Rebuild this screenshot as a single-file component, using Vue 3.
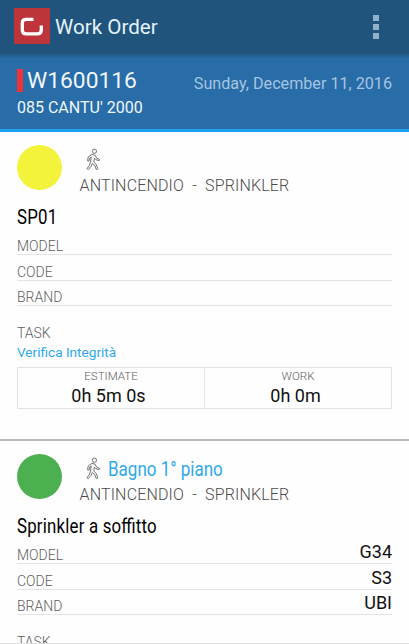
<script setup>
import { ref } from 'vue'

const order = ref({
  number: 'W1600116',
  site: "085 CANTU' 2000",
  date: 'Sunday, December 11, 2016'
})

const items = ref([
  {
    id: 1,
    color: '#f3f33b',
    place: '',
    category: 'ANTINCENDIO  -  SPRINKLER',
    name: 'SP01',
    fields: [
      { label: 'MODEL', value: '' },
      { label: 'CODE', value: '' },
      { label: 'BRAND', value: '' }
    ],
    task: 'Verifica Integrità',
    estimate: '0h 5m 0s',
    work: '0h 0m'
  },
  {
    id: 2,
    color: '#4caf50',
    place: 'Bagno 1° piano',
    category: 'ANTINCENDIO  -  SPRINKLER',
    name: 'Sprinkler a soffitto',
    fields: [
      { label: 'MODEL', value: 'G34' },
      { label: 'CODE', value: 'S3' },
      { label: 'BRAND', value: 'UBI' }
    ],
    task: '',
    estimate: '',
    work: ''
  }
])
</script>

<template>
  <div class="screen">
    <header class="app-bar">
      <svg class="logo" viewBox="0 0 36 36">
        <rect width="36" height="36" rx="1" fill="#bd353b" />
        <path
          d="M19.5 11.3H12Q8.3 11.3 8.3 15V22Q8.3 25.9 12.2 25.9H23.3Q27.3 25.9 27.3 22V17.5"
          fill="none"
          stroke="#fff"
          stroke-width="3.3"
        />
      </svg>
      <h1>Work Order</h1>
      <button class="menu" aria-label="Menu">
        <i></i><i></i><i></i>
      </button>
    </header>

    <section class="order">
      <div class="order-row">
        <span class="flag"></span>
        <span class="number">{{ order.number }}</span>
        <span class="date">{{ order.date }}</span>
      </div>
      <div class="site">{{ order.site }}</div>
    </section>

    <article v-for="item in items" :key="item.id" class="item">
      <div class="item-head">
        <span class="status" :style="{ backgroundColor: item.color }"></span>
        <div class="info">
          <div class="place">
            <svg class="walker" viewBox="0 0 16 24">
              <g fill="#f4f4f4" stroke="#707070" stroke-width="1" stroke-linejoin="round">
                <circle cx="9" cy="3.2" r="2.3" />
                <path
                  d="M6.3 6.5L2.4 9.2L1.6 13.5L3.1 13.8L4 10.5L5.5 9.4L4.8 14.6L3.6 18.4L1 21.7L2.4 22.8L5.5 19.3L6.6 16.4L9.5 18.7L10.9 22.7L12.7 22L10.9 17.4L8.4 14.6L9.1 10.6L10.6 12.2L14 13.3L14.5 11.8L11.6 10.7L9.4 7.2Z"
                />
              </g>
            </svg>
            <span class="place-name">{{ item.place }}</span>
          </div>
          <div class="category">{{ item.category }}</div>
        </div>
      </div>

      <h2>{{ item.name }}</h2>

      <div v-for="field in item.fields" :key="field.label" class="field">
        <span class="label">{{ field.label }}</span>
        <span class="value">{{ field.value }}</span>
      </div>

      <div class="label task-label">TASK</div>
      <div v-if="item.task" class="task">{{ item.task }}</div>

      <div v-if="item.estimate" class="times">
        <div class="time">
          <small>ESTIMATE</small>
          <span>{{ item.estimate }}</span>
        </div>
        <div class="time">
          <small>WORK</small>
          <span>{{ item.work }}</span>
        </div>
      </div>
    </article>
    <div class="bottom-line"></div>
  </div>
</template>

<style>
body {
  margin: 0;
}
</style>

<style scoped>
.screen {
  position: relative;
  height: 644px;
  overflow: hidden;
  background-color: #fefefe;
  font-family: Roboto, 'Liberation Sans', sans-serif;
}

.app-bar {
  display: flex;
  align-items: center;
  box-sizing: border-box;
  height: 54px;
  padding: 0 26px 0 14px;
  background-color: #20547d;
}

.logo {
  width: 36px;
  height: 36px;
  margin-top: -2px;
}

h1 {
  margin: 0 0 0 5px;
  color: #e4f2fb;
  font-size: 20.6px;
  font-weight: 400;
  line-height: 24px;
}

.menu {
  display: flex;
  flex-direction: column;
  gap: 3px;
  margin-left: auto;
  padding: 0 4px;
  border: none;
  background: none;
}

.menu i {
  width: 6px;
  height: 6px;
  background-color: #90b1ca;
}

.order {
  box-sizing: border-box;
  height: 78px;
  padding: 14px 17px 0;
  border-bottom: 3px solid #20a0f0;
  background: linear-gradient(#225b89, #286ca8 5px);
  color: #eff7fd;
}

.order-row {
  display: flex;
  align-items: center;
  height: 27px;
}

.flag {
  width: 6px;
  height: 23px;
  margin: -2px 4px 0 0;
  background-color: #ee3439;
}

.number {
  margin-top: -2px;
  font-size: 22.8px;
}

.date {
  margin: 4px 0 0 auto;
  color: #a5c5e0;
  font-size: 16.15px;
}

.site {
  margin-top: 3px;
  font-size: 16px;
  line-height: 19px;
}

.item {
  box-sizing: border-box;
  height: 309px;
  padding: 13px 17px 0;
  border-bottom: 2px solid #b8b8b8;
}

.item-head {
  display: flex;
  height: 52px;
}

.status {
  width: 45px;
  height: 45px;
  border-radius: 50%;
}

.info {
  margin-left: 17.5px;
}

.place {
  display: flex;
  align-items: center;
  height: 30px;
  padding-left: 6px;
}

.walker {
  width: 15px;
  height: 23px;
  margin-top: -2px;
}

.place-name {
  margin-left: 7px;
  color: #2fa9ea;
  font-size: 20px;
  transform: scaleX(0.85);
  transform-origin: 0 50%;
}

.category {
  margin-top: 1px;
  color: #4c4c4c;
  font-size: 16px;
  font-weight: 300;
  letter-spacing: 0.16px;
  line-height: 20px;
  white-space: pre;
}

h2 {
  width: max-content;
  height: 26px;
  margin: 7px 0 0;
  color: #000;
  font-size: 20.5px;
  font-weight: 400;
  font-feature-settings: 'liga' 1;
  letter-spacing: 0.25px;
  line-height: 26px;
  transform: scaleX(0.82);
  transform-origin: 0 50%;
}

.field {
  display: flex;
  align-items: flex-end;
  justify-content: space-between;
  box-sizing: border-box;
  height: 25.4px;
  border-bottom: 1px solid #e4e4e4;
}

.label {
  color: #606060;
  font-size: 14px;
  font-weight: 300;
  line-height: 17px;
}

.field .label {
  line-height: 15px;
}

.value {
  color: #111;
  font-size: 18px;
  line-height: 23px;
}

.task-label {
  margin-top: 19px;
}

.task {
  height: 20px;
  color: #2fa9ea;
  font-size: 13.6px;
  line-height: 20px;
}

.times {
  display: flex;
  box-sizing: border-box;
  height: 42px;
  margin-top: 5px;
  border: 1px solid #e2e2e2;
}

.time {
  display: flex;
  flex: 1;
  flex-direction: column;
  align-items: center;
}

.time + .time {
  border-left: 1px solid #e2e2e2;
}

.time small {
  color: #606060;
  font-size: 11.6px;
  font-weight: 300;
  line-height: 17px;
}

.time span {
  padding-right: 5px;
  color: #111;
  font-size: 18px;
  line-height: 22px;
}

.bottom-line {
  position: absolute;
  bottom: 0;
  left: 0;
  width: 100%;
  height: 1px;
  background-color: #dedede;
}
</style>
